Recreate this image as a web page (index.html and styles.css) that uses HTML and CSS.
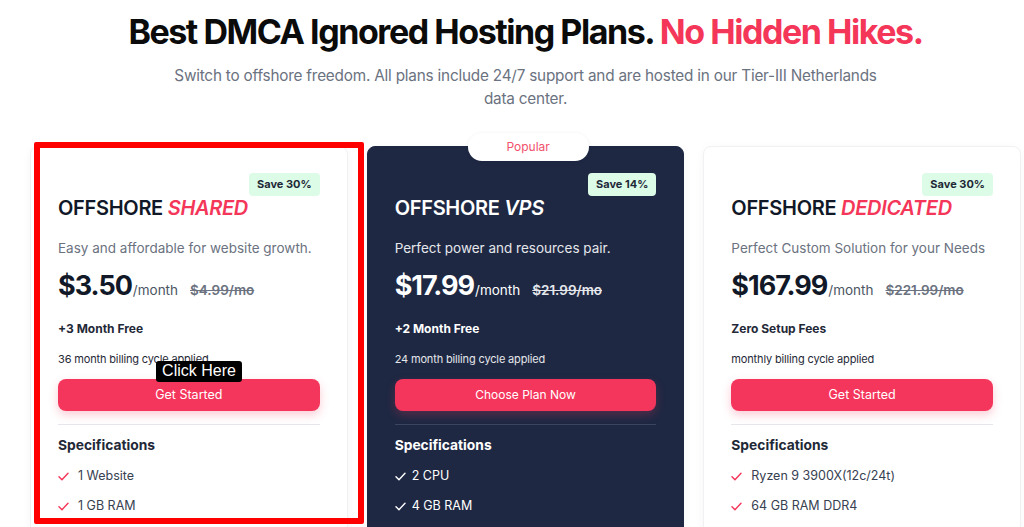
FILE: index.html
```html
<!DOCTYPE html>
<html lang="en">
<head>
    <meta charset="UTF-8">
    <meta name="viewport" content="width=device-width, initial-scale=1.0">
    <title>Offshore Hosting Plans</title>
    <link rel="stylesheet" href="styles.css">
</head>
<body>
    <div class="page">
        <header class="intro">
            <h1>Best DMCA Ignored Hosting Plans. <span class="accent">No Hidden Hikes.</span></h1>
            <p>Switch to offshore freedom. All plans include 24/7 support and are hosted in our Tier-III Netherlands data center.</p>
        </header>

        <div class="plans">
            <div class="plan">
                <div class="badge-row"><span class="save">Save 30%</span></div>
                <h3 class="plan-name">OFFSHORE <em>SHARED</em></h3>
                <p class="plan-desc">Easy and affordable for website growth.</p>
                <div class="price"><span class="amount">$3.50</span><span class="per">/month</span><s class="old">$4.99/mo</s></div>
                <p class="bonus">+3 Month Free</p>
                <p class="cycle">36 month billing cycle applied</p>
                <a class="btn" href="#">Get Started</a>
                <hr>
                <h4 class="spec-title">Specifications</h4>
                <ul class="specs">
                    <li><svg viewBox="0 0 12 10"><path d="M1 5.2l3.3 3.3L11 1.5"/></svg>1 Website</li>
                    <li><svg viewBox="0 0 12 10"><path d="M1 5.2l3.3 3.3L11 1.5"/></svg>1 GB RAM</li>
                </ul>
                <span class="tip">Click Here</span>
            </div>

            <div class="plan dark">
                <span class="popular">Popular</span>
                <div class="badge-row"><span class="save">Save 14%</span></div>
                <h3 class="plan-name">OFFSHORE <em>VPS</em></h3>
                <p class="plan-desc">Perfect power and resources pair.</p>
                <div class="price"><span class="amount">$17.99</span><span class="per">/month</span><s class="old">$21.99/mo</s></div>
                <p class="bonus">+2 Month Free</p>
                <p class="cycle">24 month billing cycle applied</p>
                <a class="btn" href="#">Choose Plan Now</a>
                <hr>
                <h4 class="spec-title">Specifications</h4>
                <ul class="specs">
                    <li><svg viewBox="0 0 12 10"><path d="M1 5.2l3.3 3.3L11 1.5"/></svg>2 CPU</li>
                    <li><svg viewBox="0 0 12 10"><path d="M1 5.2l3.3 3.3L11 1.5"/></svg>4 GB RAM</li>
                </ul>
            </div>

            <div class="plan">
                <div class="badge-row"><span class="save">Save 30%</span></div>
                <h3 class="plan-name">OFFSHORE <em>DEDICATED</em></h3>
                <p class="plan-desc">Perfect Custom Solution for your Needs</p>
                <div class="price"><span class="amount">$167.99</span><span class="per">/month</span><s class="old">$221.99/mo</s></div>
                <p class="bonus">Zero Setup Fees</p>
                <p class="cycle">monthly billing cycle applied</p>
                <a class="btn" href="#">Get Started</a>
                <hr>
                <h4 class="spec-title">Specifications</h4>
                <ul class="specs">
                    <li><svg viewBox="0 0 12 10"><path d="M1 5.2l3.3 3.3L11 1.5"/></svg>Ryzen 9 3900X(12c/24t)</li>
                    <li><svg viewBox="0 0 12 10"><path d="M1 5.2l3.3 3.3L11 1.5"/></svg>64 GB RAM DDR4</li>
                </ul>
            </div>
        </div>
    </div>
    <div class="marker"></div>
</body>
</html>
```

FILE: styles.css
```css
body {
    font-family: "Inter", "Open Sans", Arial, sans-serif;
    margin: 0;
    background: #fff;
    color: #111827;
    overflow: hidden;
}
.page {
    width: 991px;
    margin-left: 30px;
}
.intro {
    text-align: center;
    padding-top: 12px;
}
.intro h1 {
    margin: 0;
    font-size: 34px;
    line-height: 40px;
    font-weight: 700;
    letter-spacing: -1.45px;
    color: #0b0b0b;
}
.accent {
    color: #f43659;
}
.intro p {
    width: 730px;
    margin: 12px auto 0;
    font-size: 15.3px;
    line-height: 23px;
    color: #6b7280;
    letter-spacing: -0.2px;
}
.plans {
    display: grid;
    grid-template-columns: repeat(3, 1fr);
    gap: 19px;
    margin-top: 36px;
}
.plan {
    position: relative;
    background: #fff;
    border: 1px solid #f1f1f3;
    border-radius: 8px;
    box-shadow: 0 2px 10px rgba(0, 0, 0, 0.04);
    padding: 26px 27px 0;
    height: 400px;
    box-sizing: border-box;
}
.plan.dark {
    background: #1e2843;
    border-color: #1e2843;
    color: #fff;
}
.badge-row {
    display: flex;
    justify-content: flex-end;
}
.save {
    background: #dcfce7;
    color: #1f2937;
    font-size: 11px;
    font-weight: 700;
    line-height: 23px;
    padding: 0 8px;
    border-radius: 4px;
}
.plan-name {
    margin: 0;
    font-size: 20px;
    line-height: 24px;
    font-weight: 600;
    letter-spacing: -0.3px;
}
.plan-name em {
    color: #f43659;
    font-style: italic;
}
.dark .plan-name em {
    color: #fff;
}
.plan-desc {
    margin: 18px 0 0;
    font-size: 13.5px;
    line-height: 20px;
    color: #6b7280;
}
.dark .plan-desc {
    color: #e5e7eb;
}
.price {
    margin-top: 10px;
    line-height: 36px;
    display: flex;
    align-items: baseline;
}
.amount {
    font-size: 27px;
    font-weight: 700;
    letter-spacing: -1px;
}
.per {
    font-size: 13.5px;
    color: #4b5563;
    margin-left: 1px;
}
.dark .per {
    color: #fff;
}
.old {
    font-size: 13.5px;
    font-weight: 600;
    color: #6b7280;
    margin-left: 12px;
}
.dark .old {
    color: #e5e7eb;
}
.bonus {
    margin: 12px 0 0;
    font-size: 12px;
    line-height: 18px;
    font-weight: 700;
    color: #1f2937;
}
.dark .bonus {
    color: #fff;
}
.cycle {
    margin: 13px 0 0;
    font-size: 11px;
    line-height: 16px;
    letter-spacing: -0.15px;
    color: #1f2937;
}
.dark .cycle {
    color: #e5e7eb;
}
.btn {
    display: block;
    margin-top: 12px;
    height: 32px;
    line-height: 32px;
    border-radius: 8px;
    background: #f5365c;
    color: #fff;
    text-align: center;
    font-size: 12.5px;
    text-decoration: none;
    box-shadow: 0 4px 10px rgba(245, 54, 92, 0.25);
}
.dark .btn {
    font-size: 12px;
}
hr {
    margin: 13px 0 0;
    border: 0;
    border-top: 1px solid #e5e7eb;
}
.dark hr {
    border-top-color: #3a4560;
}
.spec-title {
    margin: 9px 0 0;
    font-size: 13.8px;
    line-height: 22px;
    font-weight: 700;
    color: #1f2937;
}
.dark .spec-title {
    color: #fff;
}
.specs {
    list-style: none;
    margin: 10px 0 0;
    padding: 0;
}
.specs li {
    display: flex;
    align-items: center;
    font-size: 12.5px;
    line-height: 20px;
    color: #374151;
    margin-bottom: 10px;
}
.dark .specs li {
    color: #fff;
}
.specs svg {
    width: 11px;
    height: 9px;
    margin-right: 9px;
    fill: none;
    stroke: #f43659;
    stroke-width: 1.6;
    stroke-linecap: round;
    stroke-linejoin: round;
}
.dark .specs svg {
    stroke: #fff;
    margin-right: 6px;
}
.popular {
    position: absolute;
    top: -14px;
    left: 100px;
    width: 121px;
    height: 28px;
    line-height: 28px;
    text-align: center;
    background: #fff;
    color: #f2506c;
    font-size: 12px;
    border-radius: 14px;
    box-shadow: 0 1px 4px rgba(0, 0, 0, 0.08);
}
.tip {
    position: absolute;
    top: 214px;
    left: 125px;
    width: 86px;
    height: 21px;
    line-height: 20px;
    text-align: center;
    background: #000;
    color: #fff;
    font-family: "Liberation Sans", Arial, sans-serif;
    font-size: 16px;
    border-radius: 3px;
}
.marker {
    position: absolute;
    left: 34px;
    top: 142px;
    width: 318px;
    height: 370px;
    border: 6px solid #ff0000;
    border-radius: 2px;
}
```
